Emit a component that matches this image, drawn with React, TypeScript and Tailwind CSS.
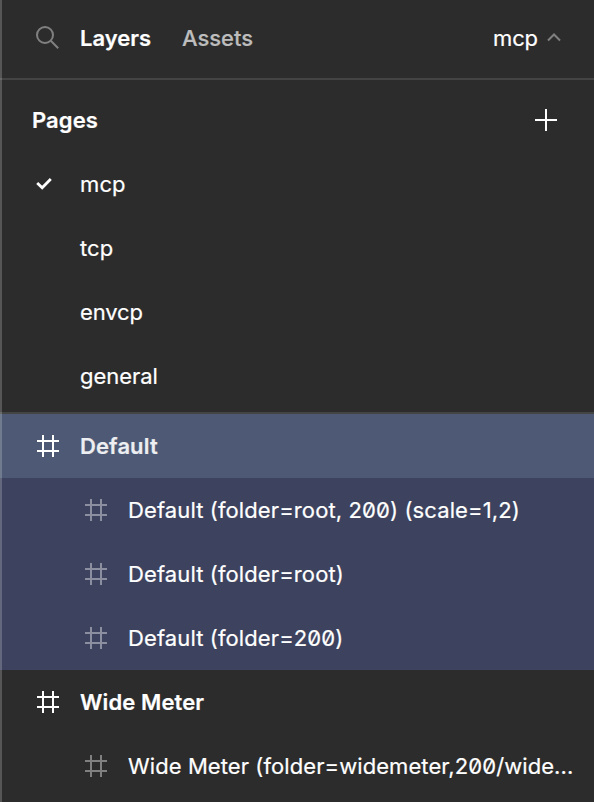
import type { ReactNode } from "react";

function Frame({ color }: { color: string }) {
  return (
    <svg width="22" height="22" viewBox="0 0 22 22" fill={color} shapeRendering="crispEdges" className="shrink-0">
      <path d="M5 0h2v5h8V0h2v5h5v2h-5v8h5v2h-5v5h-2v-5H7v5H5v-5H0v-2h5V7H0V5h5V0ZM7 7v8h8V7H7Z" fillRule="evenodd" />
    </svg>
  );
}

function PageRow({ name, checked, className = "" }: { name: string; checked?: boolean; className?: string }) {
  return (
    <div className="flex h-16 items-center pl-9">
      <div className="w-11">
        {checked && (
          <svg width="16" height="14" viewBox="0 0 16 14" fill="none" stroke="white" strokeWidth="2.8">
            <path d="M1.2 6 6.2 10.8 14.8 2" />
          </svg>
        )}
      </div>
      <span className={className}>{name}</span>
    </div>
  );
}

function LayerHead({ children, className }: { children: ReactNode; className: string }) {
  return (
    <div className={`flex h-16 items-center gap-[21px] pl-[37px] font-semibold ${className}`}>
      <Frame color="#ffffff" />
      <span>{children}</span>
    </div>
  );
}

function LayerChild({ children, color, className = "" }: { children: ReactNode; color: string; className?: string }) {
  return (
    <div className={`flex h-16 items-center gap-[21px] pl-[85px] pr-4 ${className}`}>
      <Frame color={color} />
      <span className="whitespace-nowrap">{children}</span>
    </div>
  );
}

export default function App() {
  return (
    <div className="relative h-[802px] w-[594px] overflow-hidden bg-[#2c2c2c] font-['Inter',sans-serif] text-[22px] leading-8 tracking-[0.11px] text-white [-webkit-text-stroke:0.2px] [font-feature-settings:'zero']">
      <header className="flex h-20 items-center border-b-2 border-[#444444] pb-0.5 pl-9 pr-[33px]">
        <svg width="24" height="24" viewBox="0 0 24 24" fill="none" stroke="#808080" strokeWidth="2" className="mr-5">
          <circle cx="9" cy="9" r="8" />
          <path d="m14.8 14.8 7.4 7.4" />
        </svg>
        <span className="w-[102px] font-semibold tracking-[0.02px]">Layers</span>
        <span className="font-medium tracking-[-0.05px] text-[#bdbdbd]">Assets</span>
        <span className="ml-auto tracking-[-0.1px]">mcp</span>
        <svg width="14" height="9" viewBox="0 0 14 9" fill="none" stroke="#808080" strokeWidth="2" className="mb-0.5 ml-[9px]">
          <path d="M1 7.5 7 1.5l6 6" />
        </svg>
      </header>
      <section className="h-[334px] border-b-2 border-[#444444]">
        <div className="mb-[-8px] flex h-20 items-center justify-between pl-8 pr-[37px]">
          <span className="font-semibold">Pages</span>
          <svg width="22" height="22" viewBox="0 0 22 22" fill="white" shapeRendering="crispEdges">
            <path d="M10 0h2v10h10v2H12v10h-2V12H0v-2h10z" />
          </svg>
        </div>
        <PageRow name="mcp" checked />
        <PageRow name="tcp" />
        <PageRow name="envcp" className="tracking-[-0.15px]" />
        <PageRow name="general" className="tracking-[-0.05px]" />
      </section>
      <section>
        <LayerHead className="bg-[#4e5a75] text-[#edeef1]">Default</LayerHead>
        <div className="bg-[#3d435e]">
          <LayerChild color="#8b8fa0">Default (folder=root, 200) (scale=1,2)</LayerChild>
          <LayerChild color="#8b8fa0">Default (folder=root)</LayerChild>
          <LayerChild color="#8b8fa0">Default (folder=200)</LayerChild>
        </div>
        <LayerHead className="text-white">Wide Meter</LayerHead>
        <LayerChild color="#808080" className="tracking-[0.08px]">Wide Meter (folder=widemeter,200/wide...</LayerChild>
      </section>
      <div className="absolute inset-y-0 left-0 w-0.5 bg-white/20" />
    </div>
  );
}
